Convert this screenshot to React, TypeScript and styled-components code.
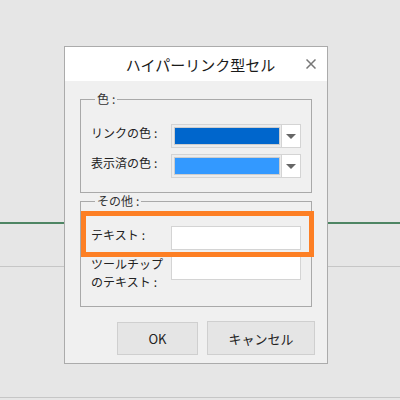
import React from "react";
import styled, { createGlobalStyle } from "styled-components";

const Global = createGlobalStyle`
  html, body { margin: 0; padding: 0; background: #e6e6e6; }
  body { font-family: "Noto Sans CJK JP", "Noto Sans", sans-serif; }
  * { box-sizing: border-box; }
`;

const Stage = styled.div`
  position: relative;
  width: 400px;
  height: 400px;
  overflow: hidden;
  background: #e6e6e6;
  display: flex;
  flex-direction: column;
`;

const Rule = styled.div<{ $top: number; $h: number; $color: string }>`
  margin-top: ${(p) => p.$top}px;
  height: ${(p) => p.$h}px;
  background: ${(p) => p.$color};
  flex: none;
`;

const Dialog = styled.div`
  position: absolute;
  left: 64px;
  top: 46px;
  width: 264px;
  border: 1px solid #ababab;
  background: #f0f0f0;
  display: flex;
  flex-direction: column;
`;

const TitleBar = styled.div`
  height: 34px;
  background: #ffffff;
  display: flex;
  align-items: center;
`;

const Title = styled.div`
  flex: 1;
  padding-left: 30px;
  text-align: center;
  font-size: 15px;
  color: #1a1a1a;
  white-space: nowrap;
`;

const Close = styled.div`
  width: 10px;
  height: 10px;
  margin-right: 11px;
  display: flex;
`;

const Body = styled.div`
  padding: 10px 15px 8px 15px;
  display: flex;
  flex-direction: column;
`;

const Group = styled.fieldset<{ $pb: number }>`
  margin: 0;
  padding: 17px 10px ${(p) => p.$pb}px 10px;
  border: 1px solid #a9a9a9;
  min-width: 0;
  display: flex;
  flex-direction: column;
  gap: 6px;
`;

const Legend = styled.legend`
  margin-left: 4px;
  padding: 0 2px;
  font-size: 12px;
  line-height: 16px;
  color: #333;
`;

const Colon = styled.span`
  margin-left: 3px;
`;

const Row = styled.div`
  display: flex;
  align-items: flex-start;
`;

const Label = styled.div<{ $lh?: number; $mt?: number }>`
  width: 80px;
  font-size: 12px;
  line-height: ${(p) => p.$lh ?? 17}px;
  margin-top: ${(p) => p.$mt ?? 0}px;
  color: #222;
  white-space: nowrap;
`;

const Combo = styled.div`
  width: 130px;
  height: 24px;
  border: 1px solid #d4d4d4;
  display: flex;
  background: #ececec;
`;

const SwatchArea = styled.div`
  flex: 1;
  padding: 2px 1px 2px 2px;
  display: flex;
`;

const Swatch = styled.div<{ $color: string }>`
  flex: 1;
  border: 1px solid #cdcdcd;
  background: ${(p) => p.$color};
`;

const DropButton = styled.div`
  width: 19px;
  background: #ffffff;
  border-left: 1px solid #d4d4d4;
  display: flex;
  align-items: center;
  justify-content: center;
`;

const Arrow = styled.div`
  width: 0;
  height: 0;
  border-left: 5px solid transparent;
  border-right: 5px solid transparent;
  border-top: 5px solid #666;
`;

const TextBox = styled.div`
  width: 130px;
  height: 24px;
  border: 1px solid #d4d4d4;
  background: #ffffff;
`;

const Buttons = styled.div`
  display: flex;
  justify-content: flex-end;
  align-items: flex-end;
  gap: 9px;
  margin-top: 14px;
  margin-right: -3px;
`;

const Button = styled.div<{ $w: number; $h: number }>`
  width: ${(p) => p.$w}px;
  height: ${(p) => p.$h}px;
  border: 1px solid #cfcfcf;
  background: #e5e5e5;
  display: flex;
  align-items: center;
  justify-content: center;
  font-size: 13px;
  color: #222;
`;

const Highlight = styled.div`
  position: absolute;
  left: 81px;
  top: 211px;
  width: 233px;
  height: 46px;
  border: 5px solid #fd7f24;
  pointer-events: none;
`;

export default function App() {
  return (
    <>
      <Global />
      <Stage>
        <Rule $top={222} $h={2} $color="#4e8563" />
        <Rule $top={42} $h={1} $color="#c6c6c6" />
        <Rule $top={130} $h={1} $color="#c6c6c6" />
        <Dialog>
          <TitleBar>
            <Title>ハイパーリンク型セル</Title>
            <Close>
              <svg width="10" height="10" viewBox="0 0 10 10">
                <path d="M0.5 0.5 L9.5 9.5 M9.5 0.5 L0.5 9.5" stroke="#777" strokeWidth="1.5" fill="none" />
              </svg>
            </Close>
          </TitleBar>
          <Body>
            <Group $pb={14}>
              <Legend>色<Colon>:</Colon></Legend>
              <Row>
                <Label>リンクの色<Colon>:</Colon></Label>
                <Combo>
                  <SwatchArea>
                    <Swatch $color="#0066cc" />
                  </SwatchArea>
                  <DropButton>
                    <Arrow />
                  </DropButton>
                </Combo>
              </Row>
              <Row>
                <Label>表示済の色<Colon>:</Colon></Label>
                <Combo>
                  <SwatchArea>
                    <Swatch $color="#3399ff" />
                  </SwatchArea>
                  <DropButton>
                    <Arrow />
                  </DropButton>
                </Combo>
              </Row>
            </Group>
            <Group $pb={15}>
              <Legend>その他<Colon>:</Colon></Legend>
              <Row>
                <Label>テキスト<Colon>:</Colon></Label>
                <TextBox />
              </Row>
              <Row>
                <Label $lh={18} $mt={-1}>
                  ツールチップ
                  <br />
                  のテキスト<Colon>:</Colon>
                </Label>
                <TextBox />
              </Row>
            </Group>
            <Buttons>
              <Button $w={81} $h={33}>OK</Button>
              <Button $w={108} $h={34}>キャンセル</Button>
            </Buttons>
          </Body>
        </Dialog>
        <Highlight />
      </Stage>
    </>
  );
}
